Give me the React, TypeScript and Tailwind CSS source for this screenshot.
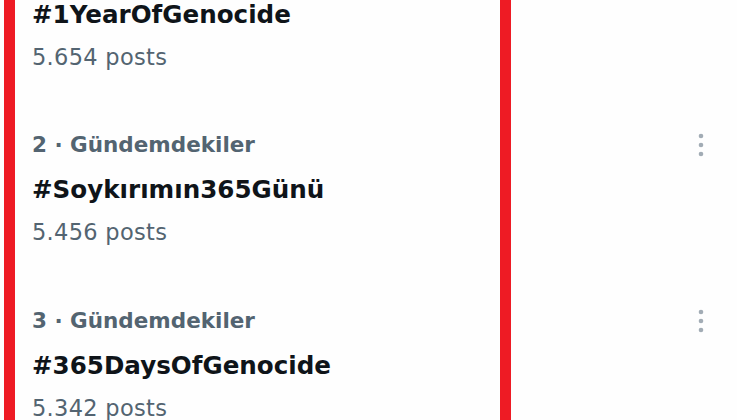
import React from "react";

const items = [
  { rank: 1, tag: "#1YearOfGenocide", posts: "5.654 posts" },
  { rank: 2, tag: "#Soykırımın365Günü", posts: "5.456 posts" },
  { rank: 3, tag: "#365DaysOfGenocide", posts: "5.342 posts" },
];

function Kebab() {
  return (
    <svg width="6" height="24" viewBox="0 0 6 24" className="text-[#a2acb5]">
      <circle cx="3" cy="3" r="2.3" fill="currentColor" />
      <circle cx="3" cy="12" r="2.3" fill="currentColor" />
      <circle cx="3" cy="21" r="2.3" fill="currentColor" />
    </svg>
  );
}

export default function App() {
  return (
    <div className="relative w-[737px] h-[420px] overflow-hidden bg-[#fefefe] font-['DejaVu_Sans',sans-serif]">
      <div className="flex flex-col">
        {items.map((it, i) => {
          const first = i === 0;
          return (
            <div
              key={it.rank}
              className={first ? "flex pl-[32px] pr-[33px] pb-[28px]" : "flex pl-[32px] pr-[33px] pt-[30px] pb-[29px]"}
            >
              <div className="flex-1 flex flex-col">
                {!first && (
                  <div className="mb-[15px] text-[21.5px] leading-[30px] font-bold text-[#536471] whitespace-nowrap">
                    {it.rank} · Gündemdekiler
                  </div>
                )}
                <div className="text-[24.6px] leading-[30px] font-bold text-[#0f1419] whitespace-nowrap">
                  {it.tag}
                </div>
                <div className="mt-[12px] text-[22.5px] leading-[30px] tracking-[0.3px] text-[#536471] whitespace-nowrap">
                  {it.posts}
                </div>
              </div>
              {!first && (
                <div className="h-[30px] flex items-center">
                  <Kebab />
                </div>
              )}
            </div>
          );
        })}
      </div>
      <div className="absolute left-[4px] top-[-40px] w-[507px] h-[520px] border-[11px] border-[#ee1b24]" />
    </div>
  );
}
